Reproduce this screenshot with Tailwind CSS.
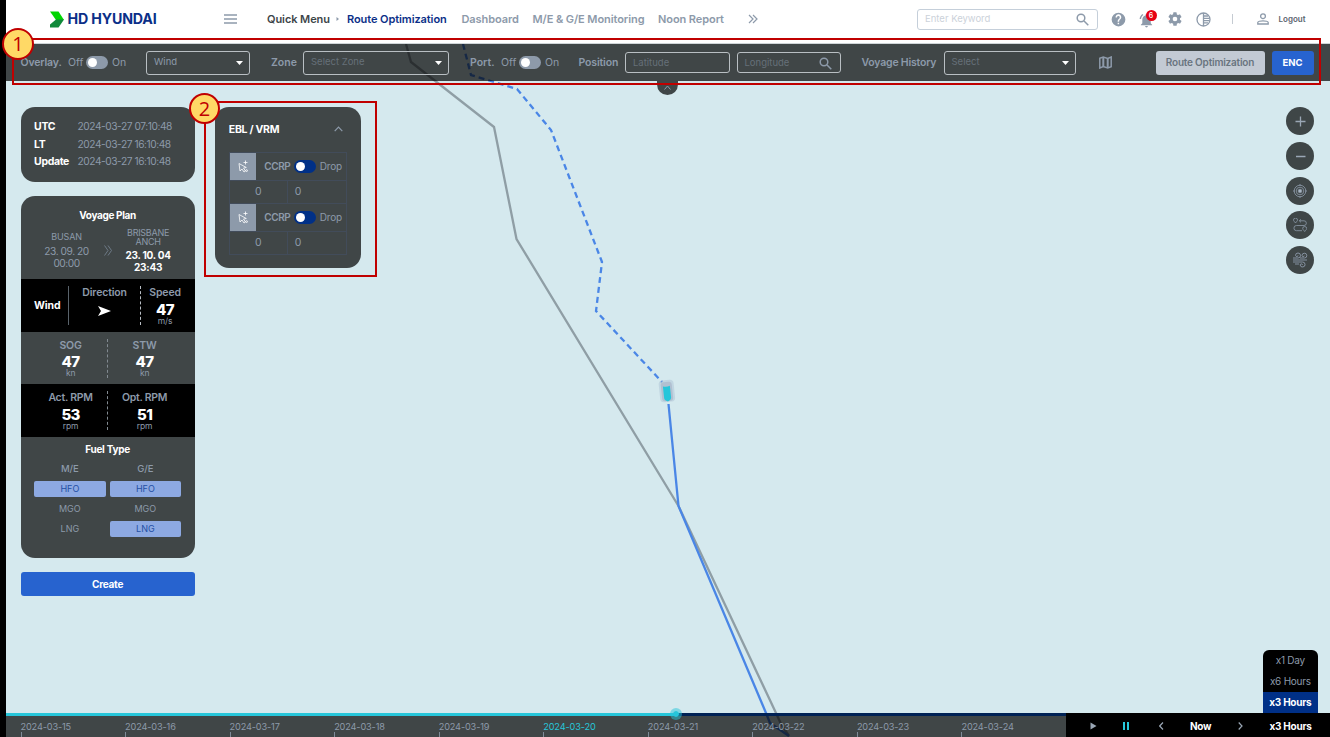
<!DOCTYPE html>
<html lang="en">
<head>
<meta charset="utf-8">
<title>Route Optimization</title>
<script src="https://cdn.jsdelivr.net/npm/@tailwindcss/browser@4"></script>
</head>
<body class="w-[1330px] h-[737px] overflow-hidden bg-[#d5e9ee] font-['Inter',sans-serif] text-[#8d9aaa]">
<div class="relative flex h-[737px] w-[1330px] overflow-hidden">

  <!-- Map canvas -->
  <svg class="absolute inset-0" width="1330" height="737" viewBox="0 0 1330 737" fill="none">
    <path d="M406 44 411 62 494 127 516.500 239 678.500 506 776 713 781 724 789 736" stroke="#8f9ea5" stroke-width="2.300"/>
    <path d="M463 44 471 75 517 89 551 130 602 262 596 311 662 382" stroke="#4a86e6" stroke-width="2.300" stroke-dasharray="6 4"/>
    <path d="M668.500 404 678.500 506 766 713 770 723 789 736" stroke="#4a86e6" stroke-width="2.300"/>
    <g transform="rotate(-6 667 392)">
      <rect x="659.500" y="380" width="15" height="22" rx="4" fill="#9fb4cc" opacity=".35"/>
      <rect x="661.500" y="382" width="11" height="19" rx="3" fill="#a9b7ca" opacity=".7"/>
      <path d="M663.500 386q3.500 1.500 7 0v12q0 1-1 2l-2.500 1.500-2.500-1.500q-1-1-1-2Z" fill="#26c6da"/>
    </g>
  </svg>

  <div class="relative w-1.5 shrink-0 bg-black"></div>

  <div class="relative flex w-[1324px] flex-col">
    <!-- Header -->
    <header class="flex h-11 shrink-0 items-center border-b border-[#cfd5d8] bg-white pb-[5px] pl-11 text-[11px] font-semibold tracking-[-0.080px] whitespace-nowrap">
      <div class="flex w-[174px] items-center">
        <svg width="14" height="17" viewBox="0 0 14 17" class="shrink-0"><path d="M0 .500h8.500L14 9H6Z" fill="#00d500"/><path d="M6 8.500h8L8.500 16.500H0v-3Z" fill="#108a3a"/></svg>
        <span class="ml-[3.500px] text-[14.200px] font-bold leading-none tracking-[-0.150px] text-[#0b2f88]">HD HYUNDAI</span>
      </div>
      <svg class="w-[43px] shrink-0" width="43" height="10" viewBox="0 0 43 10" stroke="#8d9aaa" stroke-width="1.400"><path d="M0 1h13M0 5h13M0 9h13"/></svg>
      <span class="w-[69px] text-[#3d4549]">Quick Menu</span>
      <svg class="shrink-0" width="11" height="6" viewBox="0 0 11 6"><path d="M.500 1 3 3 .500 5Z" fill="#8d9aaa"/></svg>
      <span class="w-[114.500px] text-[#0b2f88]">Route Optimization</span>
      <span class="w-[71px]">Dashboard</span>
      <span class="w-[125.500px]">M/E &amp; G/E Monitoring</span>
      <span class="w-[90px]">Noon Report</span>
      <svg class="shrink-0" width="10" height="10" viewBox="0 0 10 10" fill="none" stroke="#8d9aaa" stroke-width="1.200"><path d="m1 1 4 4-4 4M5 1l4 4-4 4"/></svg>
      <div class="ml-[159px] flex h-[21px] w-[181px] shrink-0 items-center justify-between rounded-[3px] border border-[#c5cfda] pl-[7px] pr-2 text-[9.500px] font-normal tracking-normal text-[#ccd2da]">
        <span>Enter Keyword</span>
        <svg width="13" height="13" viewBox="0 0 13 13" fill="none" stroke="#8d9aaa" stroke-width="1.500"><circle cx="5" cy="5" r="3.800"/><path d="m8 8 4.300 4.300"/></svg>
      </div>
      <svg class="ml-[12.500px] shrink-0" width="15" height="15" viewBox="0 0 24 24" fill="#8d9aaa"><path d="M12 1a11 11 0 1 0 0 22 11 11 0 0 0 0-22Zm1 18.500h-2.400V17H13Zm2.500-8.500-1.100 1.100C13.500 13 13 13.800 13 15.500h-2.400v-.600c0-1.300.5-2.400 1.400-3.300l1.400-1.400c1.500-1.500.3-3.700-1.500-3.700-1.300 0-2.300 1-2.300 2.300H7.300a4.600 4.600 0 1 1 8.200 2.200Z"/></svg>
      <div class="relative ml-[13px] h-[17px] w-[17px] shrink-0">
        <svg class="mt-0.5" width="15" height="15" viewBox="0 0 24 24" fill="#8d9aaa"><path d="M12 23a2.200 2.200 0 0 0 2.200-2.200H9.800A2.200 2.200 0 0 0 12 23Zm6.800-6.500V11c0-3.400-1.800-6-5-6.900V3.400a1.700 1.700 0 0 0-3.500 0v.700C7.100 4.900 5.300 7.600 5.300 11v5.500L3 18.700v1h18v-1ZM7 3 5.500 1.500C3 3.400 1.200 6.400 1 9.700h2.200C3.400 7 4.800 4.500 7 3Z"/></svg>
        <span class="absolute -top-[1px] left-[7px] flex h-[11px] w-[11px] items-center justify-center rounded-full bg-[#e60012] text-[7px] leading-none font-medium text-white">6</span>
      </div>
      <svg class="ml-[11px] shrink-0" width="16" height="16" viewBox="0 0 24 24" fill="#8d9aaa"><path fill-rule="evenodd" d="m19.400 13 .1-1-.1-1 2.100-1.600c.2-.2.300-.5.100-.7l-2-3.400c-.1-.2-.4-.3-.6-.2l-2.500 1c-.5-.4-1.100-.7-1.700-1l-.4-2.600A.5.5 0 0 0 14 2h-4c-.3 0-.5.200-.5.500L9.100 5c-.6.300-1.200.6-1.700 1L5 5c-.3 0-.5 0-.7.300l-2 3.400c-.1.200 0 .5.200.7L4.600 11l-.1 1 .1 1-2.100 1.600c-.2.200-.3.500-.2.700l2 3.400c.2.300.4.300.7.200l2.400-1c.5.500 1.100.8 1.700 1l.4 2.700c0 .2.200.4.500.4h4c.2 0 .5-.2.500-.4l.4-2.700c.6-.2 1.200-.5 1.700-1l2.400 1c.3.100.5 0 .7-.2l2-3.400c.1-.2 0-.5-.2-.7ZM12 15.500a3.500 3.500 0 1 1 0-7 3.500 3.500 0 0 1 0 7Z"/></svg>
      <svg class="ml-[13px] shrink-0" width="15" height="15" viewBox="0 0 15 15" fill="none" stroke="#8d9aaa" stroke-width="1.300"><circle cx="7.500" cy="7.500" r="6.500"/><path d="M7.500 1v13M7.500 4H12M7.500 6.300h6M7.500 8.600h6M7.500 10.900H12"/></svg>
      <span class="ml-[21px] h-2.5 w-px bg-[#c5cbd2]"></span>
      <svg class="ml-6 shrink-0" width="12" height="12" viewBox="0 0 12 12" fill="none" stroke="#8d9aaa" stroke-width="1.300"><circle cx="6" cy="3.200" r="2.400"/><path d="M.800 11V9.500C.800 7.300 11.200 7.300 11.200 9.500V11Z"/></svg>
      <span class="ml-[10px] text-[8px] tracking-normal text-[#59636d]">Logout</span>
    </header>

    <!-- Tool bar -->
    <div class="flex h-[37px] shrink-0 items-center bg-black/70 pl-[14.500px] text-[10.500px] whitespace-nowrap">
      <b class="w-[47.500px] font-semibold tracking-[-0.150px]">Overlay.</b><span class="w-[18px]">Off</span>
      <span class="flex h-[13px] w-[22px] items-center rounded-full bg-[#8d9aaa] pl-[2px]"><i class="h-[9px] w-[9px] rounded-full bg-white"></i></span>
      <span class="ml-1 w-[34px]">On</span>
      <div class="flex h-6 w-[104px] items-center justify-between rounded-[3px] border border-[#b9bfc3] pl-[7px] pr-[6px] text-[9.500px]"><span>Wind</span><svg width="7" height="4" viewBox="0 0 7 4"><path d="M0 0h7L3.500 4Z" fill="#fff"/></svg></div>
      <b class="ml-[21px] w-8 font-semibold">Zone</b>
      <div class="flex h-6 w-[146px] items-center justify-between rounded-[3px] border border-[#b9bfc3] pl-[7px] pr-[6px] text-[9.500px] text-[#667079]"><span>Select Zone</span><svg width="7" height="4" viewBox="0 0 7 4"><path d="M0 0h7L3.500 4Z" fill="#fff"/></svg></div>
      <b class="ml-[21px] w-[31px] font-semibold">Port.</b><span class="w-[18px]">Off</span>
      <span class="flex h-[13px] w-[22px] items-center rounded-full bg-[#8d9aaa] pl-[2px]"><i class="h-[9px] w-[9px] rounded-full bg-white"></i></span>
      <span class="ml-1 w-[33.500px]">On</span>
      <b class="w-[46.500px] font-semibold tracking-[-0.150px]">Position</b>
      <div class="flex h-[21px] w-[104.500px] items-center rounded-[3px] border border-[#b9bfc3] pt-px pl-[7px] text-[9.500px] text-[#667079]">Latitude</div>
      <div class="ml-[7px] flex h-[21px] w-[104px] items-center justify-between rounded-[3px] border border-[#b9bfc3] pt-px pl-[7px] pr-2 text-[9.500px] text-[#667079]"><span>Longitude</span><svg width="13" height="13" viewBox="0 0 13 13" fill="none" stroke="#8d9aaa" stroke-width="1.500"><circle cx="5" cy="5" r="3.800"/><path d="m8 8 4.300 4.300"/></svg></div>
      <b class="ml-[21px] w-[82px] font-semibold tracking-[-0.200px]">Voyage History</b>
      <div class="flex h-6 w-[132px] items-center justify-between rounded-[3px] border border-[#b9bfc3] pl-[7px] pr-[6px] text-[9.500px] text-[#667079]"><span>Select</span><svg width="7" height="4" viewBox="0 0 7 4"><path d="M0 0h7L3.500 4Z" fill="#fff"/></svg></div>
      <svg class="ml-[23px] shrink-0" width="13" height="13" viewBox="0 0 13 13" fill="none" stroke="#8d9aaa"><path d="M.800 2.200 4.300 1l4.400 1.400 3.500-1.400v9.700L8.700 12 4.300 10.600.800 12Z" stroke-width="1.500"/><path d="M4.300 1v9.700M8.700 2.200V12" stroke-width="2"/></svg>
      <div class="ml-[44px] flex h-6 w-[109px] items-center justify-center rounded-[3px] bg-[#c3cad4] text-[10px] font-semibold tracking-[-0.200px] text-[#69747f]">Route Optimization</div>
      <div class="ml-[7px] flex h-6 w-[42px] items-center justify-center rounded-[3px] bg-[#2763cf] pt-px text-[9.500px] font-bold text-white">ENC</div>
    </div>

    <!-- Panels -->
    <div class="flex min-h-0 flex-1 items-start pt-[26.400px] pl-[14.600px]">
      <div class="flex w-[174px] flex-col">
        <section class="grid h-[74.500px] grid-cols-[43.500px_1fr] content-start rounded-[14px] bg-black/70 pt-[11px] pl-[13.500px] text-[10.200px] leading-[17.300px] tracking-[-0.450px] whitespace-nowrap">
          <b class="text-[10.500px] font-bold tracking-[-0.350px] text-white">UTC</b><span>2024-03-27 07:10:48</span>
          <b class="text-[10.500px] font-bold tracking-[-0.350px] text-white">LT</b><span>2024-03-27 16:10:48</span>
          <b class="text-[10.500px] font-bold tracking-[-0.350px] text-white">Update</b><span>2024-03-27 16:10:48</span>
        </section>

        <section class="mt-3.5 flex h-[362.500px] flex-col overflow-hidden rounded-[14px] text-center tracking-[-0.150px] whitespace-nowrap">
          <div class="h-[83.500px] bg-black/70 pt-[12px]">
            <h2 class="text-[10px] leading-[15px] font-bold tracking-[-0.350px] text-white">Voyage Plan</h2>
            <div class="flex pt-[5.500px]">
              <div class="w-[92px] pt-[3px] text-[10.200px] leading-[12px] tracking-[-0.450px]"><p class="text-[9px] tracking-[-0.150px]">BUSAN</p><p class="mt-[2px]">23. 09. 20</p><p>00:00</p></div>
              <svg class="-ml-[9px] mt-[17px] shrink-0" width="8" height="11" viewBox="0 0 8 11" fill="none" stroke="#6d7986"><path d="m.500.500 3.500 5-3.500 5M4 .500l3.500 5-3.500 5"/></svg>
              <div class="ml-[6.500px] w-[60px] text-[10px] leading-[12px] font-bold tracking-[-0.250px] text-white"><p class="text-[9px] leading-[9px] font-normal tracking-[-0.250px] text-[#8d9aaa]">BRISBANE<br>ANCH</p><p class="mt-[2.500px]">23. 10. 04</p><p>23:43</p></div>
            </div>
          </div>
          <div class="flex h-[52.500px] items-center bg-black pl-[13.500px]">
            <b class="w-[34px] text-left text-[10.500px] font-bold text-white">Wind</b>
            <i class="h-[39px] w-px bg-[#59636b]"></i>
            <div class="flex h-[39px] w-[71px] flex-col items-center"><b class="text-[10.500px] leading-[13px] font-semibold">Direction</b><svg class="mt-[7px]" width="13" height="10" viewBox="0 0 13 10"><path d="M0 0 13 5 0 10l3-5Z" fill="#fff"/></svg></div>
            <i class="h-[39px] border-l border-dashed border-[#b8bec4]"></i>
            <div class="h-[39px] w-[48px]"><p class="text-[10.500px] leading-[13px] font-semibold">Speed</p><p class="mt-[3.500px] text-[15px] leading-[14px] font-extrabold tracking-[-0.600px] text-white">47</p><p class="text-[8.500px] leading-[8px]">m/s</p></div>
          </div>
          <div class="flex h-[52.500px] items-center bg-black/70 pl-[13.500px]">
            <div class="h-[39px] w-[73px]"><p class="text-[10.500px] leading-[13px] font-semibold">SOG</p><p class="mt-[3.500px] text-[15px] leading-[14px] font-extrabold tracking-[-0.600px] text-white">47</p><p class="text-[8.500px] leading-[8px]">kn</p></div>
            <i class="h-[39px] border-l border-dashed border-[#828a91]"></i>
            <div class="h-[39px] w-[73px]"><p class="text-[10.500px] leading-[13px] font-semibold">STW</p><p class="mt-[3.500px] text-[15px] leading-[14px] font-extrabold tracking-[-0.600px] text-white">47</p><p class="text-[8.500px] leading-[8px]">kn</p></div>
          </div>
          <div class="flex h-[52.500px] items-center bg-black pl-[13.500px]">
            <div class="h-[39px] w-[73px]"><p class="text-[10.500px] leading-[13px] font-semibold tracking-[-0.250px]">Act. RPM</p><p class="mt-[3.500px] text-[15px] leading-[14px] font-extrabold tracking-[-0.600px] text-white">53</p><p class="text-[8.500px] leading-[8px]">rpm</p></div>
            <i class="h-[39px] border-l border-dashed border-[#828a91]"></i>
            <div class="h-[39px] w-[73px]"><p class="text-[10.500px] leading-[13px] font-semibold tracking-[-0.250px]">Opt. RPM</p><p class="mt-[3.500px] text-[15px] leading-[14px] font-extrabold tracking-[-0.600px] text-white">51</p><p class="text-[8.500px] leading-[8px]">rpm</p></div>
          </div>
          <div class="flex-1 bg-black/70 pt-[5px]">
            <h2 class="text-[10px] leading-[15px] font-bold tracking-[-0.250px] text-white">Fuel Type</h2>
            <div class="mx-[13.500px] mt-[4px] grid grid-cols-2 gap-x-1 gap-y-[3.500px] text-[9px] leading-[16.500px] tracking-normal">
              <span class="text-[9.500px] font-medium">M/E</span><span class="text-[9.500px] font-medium">G/E</span>
              <span class="rounded-[2px] bg-[#8da9e2] text-[#2450a4]">HFO</span><span class="rounded-[2px] bg-[#8da9e2] text-[#2450a4]">HFO</span>
              <span>MGO</span><span>MGO</span>
              <span>LNG</span><span class="rounded-[2px] bg-[#8da9e2] text-[#2450a4]">LNG</span>
            </div>
          </div>
        </section>
        <div class="mt-3.5 flex h-[23.500px] items-center justify-center rounded-[3px] bg-[#2763cf] text-[10px] font-bold tracking-[-0.250px] text-white">Create</div>
      </div>

      <section class="ml-[20.500px] h-[161px] w-[146px] rounded-[14px] bg-black/70 px-[13.750px] pt-3.5">
        <div class="flex h-4 items-center justify-between pr-[4.500px] text-[10.500px] font-bold tracking-[-0.280px] text-white"><span>EBL / VRM</span><svg width="9" height="6" viewBox="0 0 9 6" fill="none" stroke="#8d9aaa" stroke-width="1.200"><path d="m.700 5.200 3.800-4 3.800 4"/></svg></div>
        <div class="mt-[14.500px] border-x border-t border-[#424c5a] text-[10.500px]">
          <div class="flex h-7 items-center border-b border-[#424c5a]">
            <span class="flex h-[27px] w-[26.500px] items-center justify-center bg-[#8d9aaa]"><svg width="12" height="13" viewBox="0 0 12 13" fill="none" stroke="#fff" stroke-width=".8"><path d="m2 3.500 1 7.500 2-2 2 3 1.500-1-2-3L9.300 7.500ZM8.500.500v4M6.500 2.500h4"/><circle cx="9.600" cy="10.600" r=".9"/></svg></span>
            <b class="ml-2 w-[29.500px] text-[10px] font-semibold tracking-[-0.450px]">CCRP</b>
            <span class="flex h-[13px] w-[22px] items-center rounded-full bg-[#003087] pl-[2px]"><i class="h-[9px] w-[9px] rounded-full bg-white"></i></span><span class="ml-1 text-[10px] tracking-[-0.250px]">Drop</span>
          </div>
          <div class="flex h-[23.500px] items-stretch border-b border-[#424c5a] leading-[22px]"><span class="w-[58px] border-r border-[#424c5a] text-center">0</span><span class="pl-[7px]">0</span></div>
          <div class="flex h-7 items-center border-b border-[#424c5a]">
            <span class="flex h-[27px] w-[26.500px] items-center justify-center bg-[#8d9aaa]"><svg width="12" height="13" viewBox="0 0 12 13" fill="none" stroke="#fff" stroke-width=".8"><path d="m2 3.500 1 7.500 2-2 2 3 1.500-1-2-3L9.300 7.500ZM8.500.500v4M6.500 2.500h4"/><circle cx="9.600" cy="10.600" r=".9"/></svg></span>
            <b class="ml-2 w-[29.500px] text-[10px] font-semibold tracking-[-0.450px]">CCRP</b>
            <span class="flex h-[13px] w-[22px] items-center rounded-full bg-[#003087] pl-[2px]"><i class="h-[9px] w-[9px] rounded-full bg-white"></i></span><span class="ml-1 text-[10px] tracking-[-0.250px]">Drop</span>
          </div>
          <div class="flex h-[22.500px] items-stretch border-b border-[#424c5a] leading-[22px]"><span class="w-[58px] border-r border-[#424c5a] text-center">0</span><span class="pl-[7px]">0</span></div>
        </div>
      </section>

      <div class="mr-4 ml-auto flex flex-col gap-[6.700px]">
        <span class="flex h-7 w-7 items-center justify-center rounded-full bg-[#3f4647]"><svg width="11" height="11" viewBox="0 0 11 11" stroke="#9aa7b5" stroke-width="1.300"><path d="M5.500.500v10M.500 5.500h10"/></svg></span>
        <span class="flex h-7 w-7 items-center justify-center rounded-full bg-[#3f4647]"><svg width="11" height="11" viewBox="0 0 11 11" stroke="#9aa7b5" stroke-width="1.500"><path d="M1 5.500h9.500"/></svg></span>
        <span class="flex h-7 w-7 items-center justify-center rounded-full bg-[#3f4647]"><svg width="14" height="14" viewBox="0 0 14 14" fill="none" stroke="#8d9aaa" stroke-width=".8"><circle cx="7" cy="7" r="5.800"/><circle cx="7" cy="7" r="3.800"/><circle cx="7" cy="7" r="1.800" fill="#a8b4c0"/><path d="M7 0v2M7 12v2M0 7h2M12 7h2"/></svg></span>
        <span class="flex h-7 w-7 items-center justify-center rounded-full bg-[#3f4647]"><svg width="14" height="14" viewBox="0 0 14 14" fill="none" stroke="#8d9aaa" stroke-width=".8"><path d="M2.500 5C1.500 3.500.500 3 .500 2a2 2 0 0 1 4 0c0 1-1 1.500-2 3ZM11.700 13.500c-1-1.500-2-2-2-3a2 2 0 0 1 4 0c0 1-1 1.500-2 3ZM6.500 2.800H11a2.300 2.300 0 0 1 0 4.700H3.500a2.500 2.500 0 0 0 0 5.200H9M8 1.300 6.300 2.800 8 4.300"/></svg></span>
        <span class="flex h-7 w-7 items-center justify-center rounded-full bg-[#3f4647]"><svg width="15" height="16" viewBox="0 0 15 16" fill="none" stroke="#8d9aaa" stroke-width=".9"><path d="M0 6h5a2.500 2.500 0 1 0-2.500-2.500C3 5 5 4.800 5 3.500M7 6h4.500A2.400 2.400 0 1 0 9 3.700c.3 1.400 2.300 1.200 2.300 0M0 8h14M0 10h9.500a2.500 2.500 0 1 1-2.400 3c.1-1.600 2.400-1.500 2.400 0M2 12h4"/></svg></span>
      </div>
    </div>

    <!-- Timeline -->
    <footer class="flex h-6 shrink-0 text-[10px] whitespace-nowrap">
      <div class="relative w-[1060px] shrink-0 overflow-hidden bg-black/70">
        <div class="flex h-[3px]"><i class="w-[670px] bg-[#26c6da]"></i><i class="flex-1 bg-[#002255]"></i></div>
        <div class="flex pl-[14.500px] text-[9.200px] leading-[11px] tracking-[-0.150px] [&>span]:w-[104.550px] [&>span]:shrink-0 [&>span]:pt-[5px] [&_i]:mt-0 [&_i]:block [&_i]:h-[5px] [&_i]:w-px [&_i]:bg-[#7f8b98]">
          <span>2024-03-15<i></i></span><span>2024-03-16<i></i></span><span>2024-03-17<i></i></span><span>2024-03-18<i></i></span><span>2024-03-19<i></i></span><span class="text-[#26c6da]">2024-03-20<i></i></span><span>2024-03-21<i></i></span><span>2024-03-22<i></i></span><span>2024-03-23<i></i></span><span>2024-03-24<i></i></span>
        </div>
      </div>
      <div class="flex w-[264px] items-center bg-black pt-[2px] pl-6 font-bold tracking-[-0.250px] text-white">
        <svg width="33" height="8" viewBox="0 0 33 8"><path d="M.500.500 6.500 4l-6 3.500Z" fill="#9aa7b5"/></svg>
        <svg width="36" height="8" viewBox="0 0 36 8"><path d="M0 0h2v8H0ZM4 0h2v8H4Z" fill="#26c6da"/></svg>
        <svg width="31" height="8" viewBox="0 0 31 8" fill="none" stroke="#9aa7b5" stroke-width="1.200"><path d="M4 .500.700 4 4 7.500"/></svg>
        <span class="w-12">Now</span>
        <svg width="31" height="8" viewBox="0 0 31 8" fill="none" stroke="#9aa7b5" stroke-width="1.200"><path d="M.700.500 4 4 .700 7.500"/></svg>
        <span class="ml-[0.500px]">x3 Hours</span>
      </div>
    </footer>
  </div>

  <!-- Floating elements -->
  <div class="absolute top-[81px] left-[656.500px] flex h-[14px] w-[21px] justify-center rounded-b-full bg-[#3f4647] pt-[4px]"><svg width="7" height="5" viewBox="0 0 7 5" fill="none" stroke="#8d9aaa"><path d="m.500 4.500 3-3.500 3 3.500"/></svg></div>
  <div class="absolute top-[708px] left-[669.500px] h-3 w-3 rounded-full border-[3px] border-[#26c6da]/50 bg-[#26c6da] bg-clip-padding"></div>
  <div class="absolute top-[650px] left-[1262.600px] w-[55.500px] overflow-hidden rounded-t-md bg-black text-center text-[10px] leading-[21px] tracking-[-0.250px] whitespace-nowrap"><p>x1 Day</p><p>x6 Hours</p><p class="bg-[#003087] font-bold text-white">x3 Hours</p></div>

  <!-- Numbered callouts -->
  <div class="absolute top-[38px] left-[12px] h-[47px] w-[1309px] border-2 border-[#c00000]"></div>
  <div class="absolute top-[101px] left-[203.500px] h-[175.500px] w-[173.500px] border-2 border-[#c00000]"></div>
  <div class="absolute top-[28px] left-[2px] flex h-8 w-8 items-center justify-center rounded-full border-2 border-[#c00000] bg-[#ffd966] font-['Open_Sans',sans-serif] text-[20px] leading-none font-normal text-[#c00000]">1</div>
  <div class="absolute top-[93px] left-[189px] flex h-[31px] w-[31px] items-center justify-center rounded-full border-2 border-[#c00000] bg-[#ffd966] font-['Open_Sans',sans-serif] text-[20px] leading-none font-normal text-[#c00000]">2</div>
</div>
</body>
</html>
